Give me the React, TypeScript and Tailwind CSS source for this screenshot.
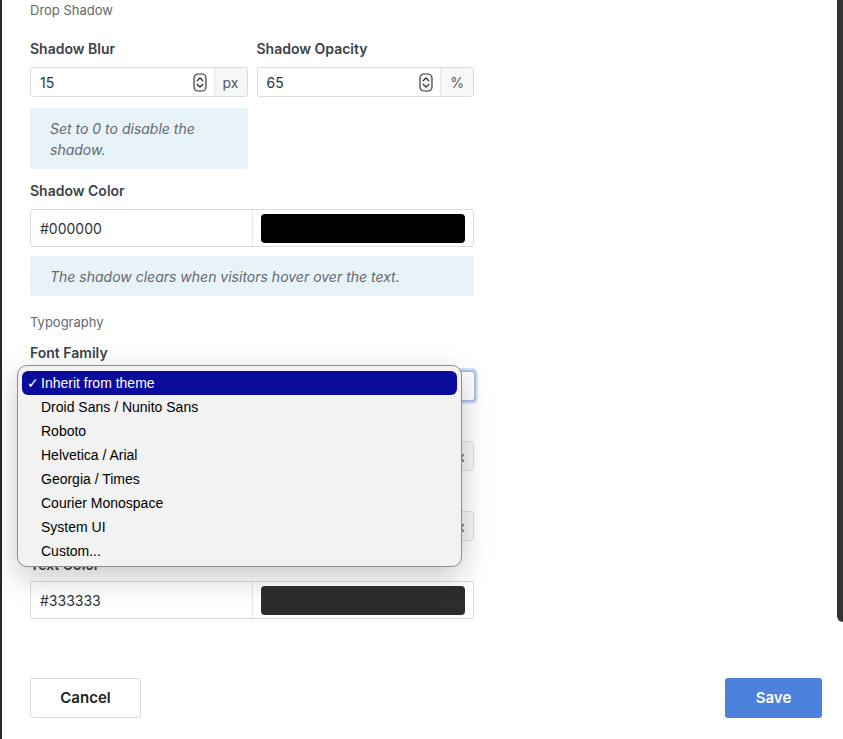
const sans = "font-['Inter','Liberation_Sans',sans-serif]"

const Stepper = () => (
    <svg width="14" height="19" viewBox="0 0 14 19" className="shrink-0">
        <rect x="1" y="1" width="12" height="17" rx="4" fill="#f4f4f4" stroke="#3a3a3a" strokeWidth="1.2" />
        <path d="M4.3 7.6 L7 4.9 L9.7 7.6" fill="none" stroke="#222" strokeWidth="1.3" strokeLinecap="round" strokeLinejoin="round" />
        <path d="M4.3 11.4 L7 14.1 L9.7 11.4" fill="none" stroke="#222" strokeWidth="1.3" strokeLinecap="round" strokeLinejoin="round" />
    </svg>
)

const NumberField: React.FC<{ value?: string; unit: string }> = ({ value, unit }) => (
    <div className="flex h-[30px] rounded-[3px] border border-[#dcdcde] bg-white overflow-hidden">
        <div className="flex flex-1 items-center pl-[9px] pr-[7px]">
            <span className="flex-1 text-[14px] text-[#2c3338]">{value}</span>
            <Stepper />
        </div>
        <div className="flex w-[33px] items-center justify-center border-l border-[#e4e4e6] bg-[#f6f7f7] text-[14px] text-[#50575e]">
            {unit}
        </div>
    </div>
)

const ColorField: React.FC<{ value: string; swatch: string }> = ({ value, swatch }) => (
    <div className="flex h-[38px] rounded-[3px] border border-[#dcdcde] bg-white">
        <div className="flex w-[222px] items-center border-r border-[#e4e4e6] pl-[9px] text-[14px] text-[#2c3338]">
            {value}
        </div>
        <div className="flex flex-1 items-center px-[8px]">
            <div className={`h-[29px] w-full rounded-[4px] ${swatch}`} />
        </div>
    </div>
)

const Label: React.FC<{ children?: React.ReactNode; className?: string }> = ({ children, className }) => (
    <div className={`h-[18px] text-[14px] font-semibold leading-[18px] text-[#3c434a] ${className ?? ''}`}>{children}</div>
)

const Notice: React.FC<{ children: React.ReactNode; className?: string }> = ({ children, className }) => (
    <div className={`rounded-[2px] bg-[#e8f2f9] px-[20px] text-[14px] italic leading-[21px] text-[#646970] ${className ?? ''}`}>
        {children}
    </div>
)

const fonts = [
    'Inherit from theme',
    'Droid Sans / Nunito Sans',
    'Roboto',
    'Helvetica / Arial',
    'Georgia / Times',
    'Courier Monospace',
    'System UI',
    'Custom...',
]

export default function App() {
    return (
        <div className={`relative flex h-[739px] w-[843px] overflow-hidden bg-white ${sans}`}>
            <div className="w-[2px] bg-[#2b2623]" />

            <div className="flex flex-1 flex-col">
                <div className="flex w-[472px] flex-col pl-[28px]">
                    <div className="mt-[2px] text-[13px] leading-[16px] text-[#646970]">Drop Shadow</div>

                    <div className="mt-[22px] grid grid-cols-2 gap-x-[9px]">
                        <div className="flex flex-col">
                            <Label>Shadow Blur</Label>
                            <div className="mt-[9px]">
                                <NumberField value="15" unit="px" />
                            </div>
                            <Notice className="mt-[11px] flex h-[61px] items-center">Set to 0 to disable the shadow.</Notice>
                        </div>
                        <div className="flex flex-col">
                            <Label>Shadow Opacity</Label>
                            <div className="mt-[9px]">
                                <NumberField value="65" unit="%" />
                            </div>
                        </div>
                    </div>

                    <Label className="mt-[13px]">Shadow Color</Label>
                    <div className="mt-[9px]">
                        <ColorField value="#000000" swatch="bg-black" />
                    </div>
                    <Notice className="mt-[9px] flex h-[40px] items-center">
                        The shadow clears when visitors hover over the text.
                    </Notice>

                    <div className="mt-[18px] text-[13px] leading-[16px] text-[#646970]">Typography</div>
                    <Label className="mt-[14px]">Font Family</Label>
                    <div className="mt-[8px] h-[32px] w-[446px] rounded-[4px] border-2 border-[#a9c1ec] bg-white shadow-[0_0_0_2px_#d6e2f7]" />

                    {/* these two rows sit under the open list */}
                    <Label className="mt-[11px]" />
                    <div className="mt-[10px]">
                        <NumberField unit="px" />
                    </div>
                    <Label className="mt-[12px]" />
                    <div className="mt-[10px]">
                        <NumberField unit="px" />
                    </div>

                    <Label className="mt-[15px]">Text Color</Label>
                    <div className="mt-[7px]">
                        <ColorField value="#333333" swatch="bg-[#2d2d2d]" />
                    </div>
                </div>

                <div className="mt-auto flex items-center justify-between pb-[21px] pl-[28px] pr-[15px]">
                    <button className="h-[40px] w-[111px] rounded-[3px] border border-[#dcdcde] bg-white text-[15px] font-semibold text-[#1e1e1e]">
                        Cancel
                    </button>
                    <button className="h-[40px] w-[97px] rounded-[3px] bg-[#4d81dc] text-[15px] font-semibold text-white">
                        Save
                    </button>
                </div>
            </div>

            <div className="h-[622px] w-[6px] rounded-bl-[6px] bg-[#333333]" />

            {/* native select popup */}
            <div className="absolute left-[17px] top-[365px] w-[445px] rounded-[10px] border border-[#8d8d8d] bg-[#f2f2f2] px-[4px] pb-[3px] pt-[5px] font-['Liberation_Sans',Arial,sans-serif] shadow-[0_10px_30px_rgba(0,0,0,0.22)]">
                {fonts.map((f, i) => (
                    <div
                        key={f}
                        className={`relative flex h-[24px] items-center rounded-[6px] pl-[19px] text-[14px] ${
                            i === 0 ? 'bg-[#0b0b9c] text-white' : 'text-black'
                        }`}
                    >
                        {i === 0 && <span className="absolute left-[5px] text-[14px]">✓</span>}
                        {f}
                    </div>
                ))}
            </div>
        </div>
    )
}
